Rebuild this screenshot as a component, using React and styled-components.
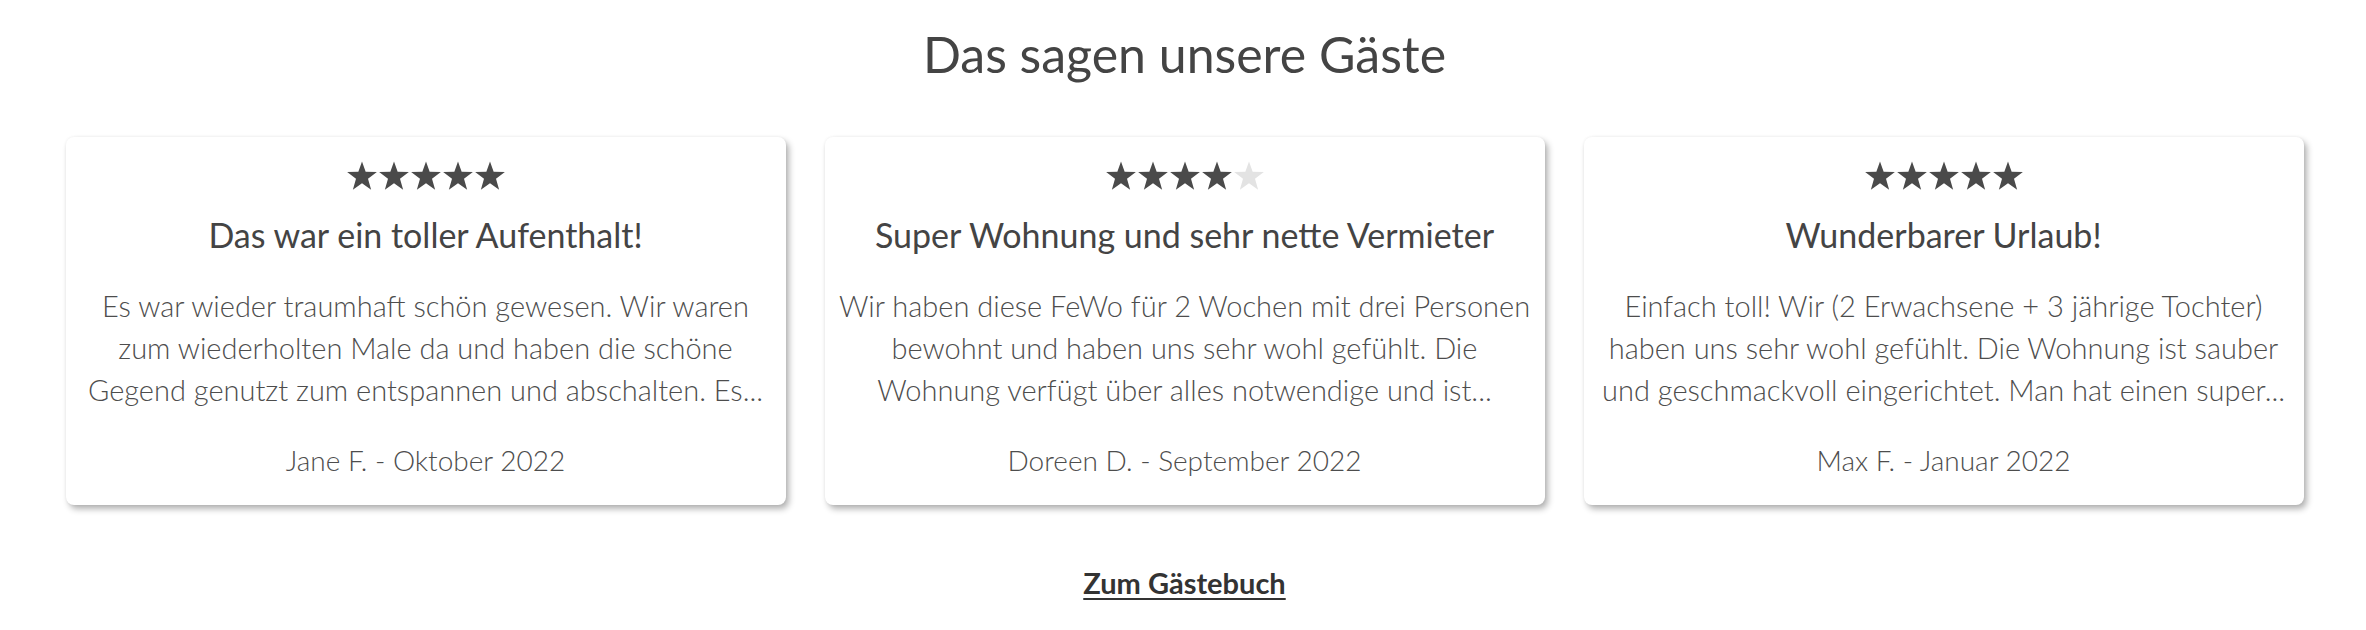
import React from "react";
import styled, { createGlobalStyle } from "styled-components";

const reviews = [
  {
    id: 1,
    rating: 5,
    title: "Das war ein toller Aufenthalt!",
    text: "Es war wieder traumhaft schön gewesen. Wir waren zum wiederholten Male da und haben die schöne Gegend genutzt zum entspannen und abschalten. Es...",
    author: "Jane F. - Oktober 2022",
  },
  {
    id: 2,
    rating: 4,
    title: "Super Wohnung und sehr nette Vermieter",
    text: "Wir haben diese FeWo für 2 Wochen mit drei Personen bewohnt und haben uns sehr wohl gefühlt. Die Wohnung verfügt über alles notwendige und ist...",
    author: "Doreen D. - September 2022",
  },
  {
    id: 3,
    rating: 5,
    title: "Wunderbarer Urlaub!",
    text: "Einfach toll! Wir (2 Erwachsene + 3 jährige Tochter) haben uns sehr wohl gefühlt. Die Wohnung ist sauber und geschmackvoll eingerichtet. Man hat einen super...",
    author: "Max F. - Januar 2022",
  },
];

const Star = ({ filled }) => (
  <StarSvg viewBox="0 0 24 23" $filled={filled}>
    <polygon points="12,0.4 14.8,8.3 23.4,8.5 16.6,13.7 19,22 12,17.1 5,22 7.4,13.7 0.6,8.5 9.2,8.3" />
  </StarSvg>
);

export default function App() {
  return (
    <>
      <GlobalStyle />
      <Section>
        <Heading>Das sagen unsere Gäste</Heading>
        <Grid>
          {reviews.map((el) => (
            <Card key={el.id}>
              <Stars>
                {[1, 2, 3, 4, 5].map((n) => (
                  <Star key={n} filled={n <= el.rating} />
                ))}
              </Stars>
              <CardTitle>{el.title}</CardTitle>
              <CardText>{el.text}</CardText>
              <Author>{el.author}</Author>
            </Card>
          ))}
        </Grid>
        <MoreLink href="#">Zum Gästebuch</MoreLink>
      </Section>
    </>
  );
}

const GlobalStyle = createGlobalStyle`
  body {
    margin: 0;
    background: #fff;
    font-family: Lato, "Open Sans", sans-serif;
    color: #444;
  }
`;
const Section = styled.section`
  display: flex;
  flex-direction: column;
  align-items: center;
  padding: 22px 62px 0 65px;
`;
const Heading = styled.h2`
  margin: 0;
  font-size: 50px;
  font-weight: 400;
  line-height: 64px;
  color: #444;
`;
const Grid = styled.div`
  display: grid;
  grid-template-columns: repeat(3, 720px);
  gap: 39px;
  margin-top: 51px;
`;
const Card = styled.div`
  display: flex;
  flex-direction: column;
  align-items: center;
  padding: 24px 14px 25px;
  background: #fff;
  border-radius: 8px;
  box-shadow: 0 0 3px rgba(0, 0, 0, 0.06), 3px 4px 6px rgba(0, 0, 0, 0.3);
  text-align: center;
`;
const Stars = styled.div`
  display: flex;
  height: 30px;
`;
const StarSvg = styled.svg`
  width: 32px;
  height: 30px;
  fill: ${(p) => (p.$filled ? "#4a4a4a" : "#e3e3e3")};
`;
const CardTitle = styled.h3`
  margin: 24px 0 0;
  font-size: 34px;
  font-weight: 400;
  line-height: 40px;
  color: #444;
`;
const CardText = styled.p`
  margin: 30px 0 0;
  font-size: 29px;
  font-weight: 300;
  line-height: 42px;
  color: #4d4d4d;
`;
const Author = styled.p`
  margin: 29px 0 0;
  font-size: 28px;
  font-weight: 300;
  line-height: 40px;
  color: #4d4d4d;
`;
const MoreLink = styled.a`
  margin-top: 60px;
  font-size: 29px;
  font-weight: 700;
  color: #333;
  text-decoration: underline;
  text-underline-offset: 4px;
`;
